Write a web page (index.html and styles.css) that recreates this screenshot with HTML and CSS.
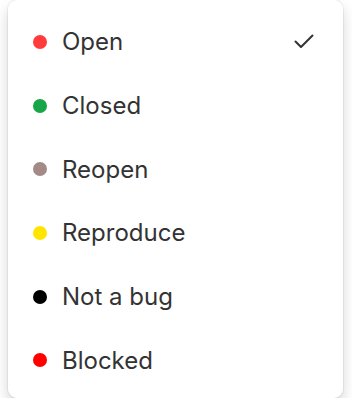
FILE: index.html
```
<!DOCTYPE html>
<html>
<head>
<meta charset="utf-8">
<link rel="stylesheet" href="styles.css">
</head>
<body>
<div class="menu">
  <div class="item"><span class="dot red-soft"></span><span class="label">Open</span>
    <svg class="check" width="20" height="15" viewBox="0 0 20 15"><path d="M1.5 7.5 L7 13 L18.5 1.5" fill="none" stroke="#333" stroke-width="2" stroke-linecap="round" stroke-linejoin="round"/></svg>
  </div>
  <div class="item"><span class="dot green"></span><span class="label">Closed</span></div>
  <div class="item"><span class="dot mauve"></span><span class="label">Reopen</span></div>
  <div class="item"><span class="dot yellow"></span><span class="label">Reproduce</span></div>
  <div class="item"><span class="dot black"></span><span class="label">Not a bug</span></div>
  <div class="item"><span class="dot red"></span><span class="label">Blocked</span></div>
</div>
</body>
</html>
```
FILE: styles.css
```
html, body {
  margin: 0;
  padding: 0;
  background: #ffffff;
}
body {
  padding: 0 9px 0 8px;
  font-family: Inter, "Noto Sans", sans-serif;
}
.menu {
  background: #fff;
  border-radius: 9px;
  box-shadow: 0 0 0 1px rgba(0,0,0,0.05), 0 7px 14px rgba(0,0,0,0.17);
  padding: 10px 0 6px;
  height: 382px;
}
.item {
  height: 63.7px;
  display: flex;
  align-items: center;
  padding: 0 29px 0 25px;
}
.dot {
  width: 14px;
  height: 14px;
  border-radius: 50%;
  flex: none;
  margin-right: 15px;
}
.label {
  font-size: 24px;
  color: #333333;
  flex: 1;
}
.check { flex: none; }
.red-soft { background: #ff3b3b; }
.green { background: #17a548; }
.mauve { background: #a38a87; }
.yellow { background: #ffe500; }
.black { background: #000; }
.red { background: #ff0000; }
```
